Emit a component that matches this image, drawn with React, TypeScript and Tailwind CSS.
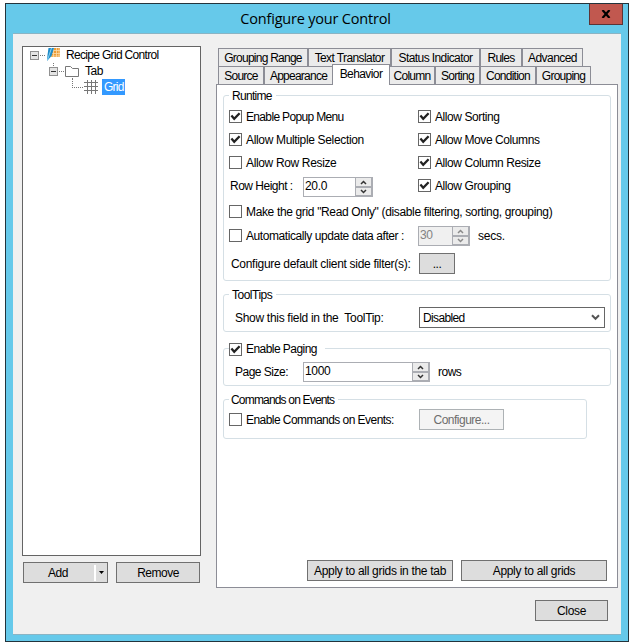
import type { ReactNode } from "react";
import clsx from "clsx";

const FONT = "font-['Liberation_Sans',Arial,sans-serif] text-[12px] leading-[14px] tracking-[-0.5px] text-black";

function Button({ className, children }: { className?: string; children: ReactNode }) {
  return (
    <button
      type="button"
      className={clsx(
        "flex h-[21px] shrink-0 items-center justify-center border whitespace-pre",
        className,
      )}
    >
      {children}
    </button>
  );
}

function Check({ label, checked, className }: { label: string; checked?: boolean; className?: string }) {
  return (
    <label className={clsx("flex h-[23px] items-center whitespace-pre", className)}>
      <span className="mr-1 h-[13px] w-[13px] shrink-0 border border-[#666] bg-white">
        {checked && (
          <svg width="11" height="11" viewBox="0 0 11 11" fill="none">
            <path d="M1.4 4.6 L4.2 7.8 L9.6 2.2" stroke="#222" strokeWidth="2.3" />
          </svg>
        )}
      </span>
      {label}
    </label>
  );
}

function Arrow({ down }: { down?: boolean }) {
  return (
    <svg width="7" height="5" viewBox="0 0 7 5" fill="none">
      <path d={down ? "M1 1 L3.5 3.5 L6 1" : "M1 4 L3.5 1.5 L6 4"} stroke="currentColor" strokeWidth="1.5" />
    </svg>
  );
}

function Spinner({ value, className, disabled }: { value: string; className: string; disabled?: boolean }) {
  return (
    <div
      className={clsx(
        "flex h-5 shrink-0 border border-[#abadb3]",
        disabled ? "bg-[#f0f0f0] text-[#838383]" : "bg-white",
        className,
      )}
    >
      <span className="flex-1 pt-px pl-px tracking-[-0.3px]">{value}</span>
      <div
        className={clsx(
          "flex w-[17px] flex-col border-l border-[#abadb3] bg-[#abadb3]",
          disabled ? "text-[#8a8a8a]" : "text-[#333]",
        )}
      >
        <span className="mr-px flex h-2 items-center justify-center bg-[#ebebeb]">
          <Arrow />
        </span>
        <span className="mt-[2px] mr-px flex h-[7px] items-center justify-center bg-[#ebebeb]">
          <Arrow down />
        </span>
      </div>
    </div>
  );
}

function Group({ title, className, children }: { title: ReactNode; className: string; children: ReactNode }) {
  return (
    <section className={clsx("rounded-[3px] border border-[#d5dfe5]", className)}>
      <div className="-mt-2 flex h-4 items-center">{title}</div>
      {children}
    </section>
  );
}

function Legend({ className, children }: { className?: string; children: ReactNode }) {
  return <span className={clsx("ml-[5px] bg-white pr-1 pl-[3px] whitespace-pre", className)}>{children}</span>;
}

function Tab({ label, className }: { label: string; className: string }) {
  return (
    <div
      className={clsx(
        "flex h-[18px] shrink-0 items-center justify-center border border-b-0 border-[#8c8d96] bg-[#ebebeb] pt-px whitespace-pre",
        className,
      )}
    >
      {label}
    </div>
  );
}

function Expander() {
  return (
    <>
      <rect x="0.5" y="4.5" width="8" height="8" fill="#e4e4e4" stroke="#919191" />
      <path d="M2 8.5h5" stroke="#333" />
    </>
  );
}

function Tree() {
  return (
    <div className="h-[510px] w-[179px] border border-[#646464] bg-white">
      <div className="flex h-4 items-center pl-[7px]">
        <svg width="36" height="16" viewBox="0 0 36 16" fill="none">
          <Expander />
          <path d="M10 8.5h6" stroke="#777" strokeDasharray="1 1" />
          <path d="M21 1h9v9h-9z" fill="#ec9a35" />
          <path d="M23.5 1v9M26.5 1v9M29 1v9M21 3.5h9M21 6.5h9M21 9h9" stroke="#fbdca9" strokeWidth=".8" />
          <path d="M18.5 1h5.5l-2.5 8-4.500 5 .5-6z" fill="#1d8bc9" />
          <path d="M21.5 1l-4 12" stroke="#8bd3f3" />
        </svg>
        <span className="tracking-[-0.68px]">Recipe Grid Control</span>
      </div>
      <div className="flex h-4 items-center pl-[26px]">
        <svg width="36" height="16" viewBox="0 0 36 16" fill="none">
          <path d="M4.5 0v4" stroke="#777" strokeDasharray="1 1" />
          <Expander />
          <path d="M10 8.5h5" stroke="#777" strokeDasharray="1 1" />
          <path d="M16.5 13.5v-10h5l2 2h6v8z" fill="#fff" stroke="#777" />
          <path d="M23.5 15v1" stroke="#777" />
        </svg>
        <span>Tab</span>
      </div>
      <div className="flex h-4 items-center pl-[49px]">
        <svg width="30" height="16" viewBox="0 0 30 16" fill="none">
          <path d="M.5 0v9M2 8.5h9" stroke="#777" strokeDasharray="1 1" />
          <path d="M15.5 1v14M19.5 1v14M23.5 1v14M12 3.5h14M12 7.5h14M12 11.5h14" stroke="#777" />
        </svg>
        <span className="w-[23px] bg-[#3399ff] py-px pl-0.5 tracking-[-0.75px] text-white">Grid</span>
      </div>
    </div>
  );
}

function Tabs() {
  return (
    <div className="relative z-10 pl-0.5 tracking-[-0.75px]">
      <div className="flex">
        <Tab label="Grouping Range" className="w-[90px]" />
        <Tab label="Text Translator" className="w-[83px] tracking-[-0.6px]" />
        <Tab label="Status Indicator" className="w-[89px] tracking-[-0.6px]" />
        <Tab label="Rules" className="w-[42px]" />
        <Tab label="Advanced" className="w-[61px] tracking-[-0.55px]" />
      </div>
      <div className="flex">
        <Tab label="Source" className="w-[46px]" />
        <Tab label="Appearance" className="w-[68px] border-r-0" />
        <div className="-mt-0.5 -mb-px flex h-[21px] w-[58px] items-center justify-center border border-b-0 border-[#8c8d96] bg-white pb-0.5 tracking-[-0.6px]">
          Behavior
        </div>
        <Tab label="Column" className="w-[45px] border-l-0" />
        <Tab label="Sorting" className="w-[45px]" />
        <Tab label="Condition" className="w-[56px]" />
        <Tab label="Grouping" className="w-[55px]" />
      </div>
    </div>
  );
}

function BehaviorPage() {
  return (
    <div className="flex h-[504px] w-[402px] flex-col border border-[#8c8d96] bg-white pt-2.5 pr-2.5 pb-1.5 pl-1.5">
      <Group title={<Legend className="tracking-[-0.7px]">Runtime</Legend>} className="h-[186px] w-[388px]">
        <div className="flex pt-px pl-[5px]">
          <div className="w-[189px]">
            <Check label="Enable Popup Menu" checked className="tracking-[-0.66px]" />
            <Check label="Allow Multiple Selection" checked className="tracking-[-0.34px]" />
            <Check label="Allow Row Resize" className="tracking-[-0.35px]" />
            <div className="mt-[3px] flex h-5 items-center pl-px">
              <span className="w-[73px] pb-0.5">Row Height :</span>
              <Spinner value="20.0" className="w-[70px]" />
            </div>
          </div>
          <div className="tracking-[-0.42px]">
            <Check label="Allow Sorting" checked />
            <Check label="Allow Move Columns" checked />
            <Check label="Allow Column Resize" checked />
            <Check label="Allow Grouping" checked />
          </div>
        </div>
        <Check
          label={'Make the grid "Read Only" (disable filtering, sorting, grouping)'}
          className="mt-[3px] ml-[5px] tracking-[-0.35px]"
        />
        <div className="mt-[3px] flex h-5 items-center pl-[5px]">
          <Check label="Automatically update data after :" className="w-[189px] pb-px tracking-[-0.43px]" />
          <Spinner value="30" className="w-[52px]" disabled />
          <span className="ml-2 tracking-[-0.2px]">secs.</span>
        </div>
        <div className="mt-[7px] flex items-center pl-[7px]">
          <span className="w-[188px] tracking-[-0.3px] whitespace-pre">Configure default client side filter(s):</span>
          <Button className="w-9 border-[#707070] bg-[#dddddd]">...</Button>
        </div>
      </Group>

      <Group title={<Legend>ToolTips</Legend>} className="mt-[13px] h-[38px] w-[388px]">
        <div className="mt-1 flex items-center pl-[11px]">
          <span className="w-[184px] tracking-[-0.3px] whitespace-pre">Show this field in the  ToolTip:</span>
          <div className="flex h-[21px] w-[186px] items-center justify-between border border-[#666] bg-white pr-1 pl-[3px]">
            <span className="tracking-[-0.65px]">Disabled</span>
            <svg width="9" height="7" viewBox="0 0 9 7" fill="none">
              <path d="M1 1.2l3.5 3.6L8 1.2" stroke="#555" strokeWidth="2" />
            </svg>
          </div>
        </div>
      </Group>

      <Group
        title={<Check label="Enable Paging" checked className="ml-[5px] h-4 bg-white pr-2 tracking-[-0.55px]" />}
        className="mt-4 h-[38px] w-[388px]"
      >
        <div className="mt-[5px] flex items-center pl-[11px]">
          <span className="w-[68px]">Page Size:</span>
          <Spinner value="1000" className="w-[127px]" />
          <span className="ml-2">rows</span>
        </div>
      </Group>

      <Group
        title={<Legend className="-indent-px tracking-[-0.82px]">Commands on Events</Legend>}
        className="mt-[13px] h-10 w-[364px]"
      >
        <div className="mt-px flex h-[21px] items-center pl-[5px]">
          <Check label="Enable Commands on Events:" className="w-[190px] tracking-[-0.55px]" />
          <Button className="w-[85px] border-[#adb2b5] bg-[#f4f4f4] text-[#6d6d6d]">Configure...</Button>
        </div>
      </Group>

      <div className="mt-auto flex justify-end gap-2 tracking-[-0.3px]">
        <Button className="w-[146px] border-[#707070] bg-[#dddddd]">Apply to all grids in the tab</Button>
        <Button className="w-[146px] border-[#707070] bg-[#dddddd]">Apply to all grids</Button>
      </div>
    </div>
  );
}

export default function App() {
  return (
    <div className={clsx("h-[644px] w-[634px] bg-white pt-[3px] pl-[5px]", FONT)}>
      <div className="flex h-[639px] w-[624px] flex-col border border-[#23343c] bg-[#66c9ea] px-[7px]">
        <header className="flex h-[29px] shrink-0 items-start">
          <h1 className="flex-1 pt-[5px] pl-[29px] text-center font-['Open_Sans','Noto_Sans',sans-serif] text-[14.5px] leading-5 tracking-[-0.2px]">
            Configure your Control
          </h1>
          <button
            type="button"
            aria-label="Close"
            className="-mr-0.5 flex h-[21px] w-[34px] items-center justify-center border border-t-0 border-[#5c3436] bg-[#c1584f]"
          >
            <svg width="10" height="8" viewBox="0 0 10 8">
              <path d="M1.5 0L8.5 8M8.5 0L1.5 8" stroke="#000" strokeWidth="2.2" />
            </svg>
          </button>
        </header>

        <main className="h-[602px] border-y border-[#8ab4c4] bg-[#f0f0f0] pr-[3px] pl-[9px]">
          <div className="flex items-start justify-between pt-3">
            <div>
              <Tree />
              <div className="mt-1.5 flex gap-2 pl-px">
                <button type="button" className="flex h-[21px] w-[85px] items-center border border-[#707070] bg-[#dddddd]">
                  <span className="flex-1 pr-0.5 text-center">Add</span>
                  <span className="h-4 w-0.5 bg-white" />
                  <svg width="11" height="5" viewBox="0 0 11 5">
                    <path d="M3 1h5L5.5 4z" fill="#000" />
                  </svg>
                </button>
                <Button className="w-[84px] border-[#707070] bg-[#dddddd]">Remove</Button>
              </div>
            </div>
            <div className="pt-0.5">
              <Tabs />
              <BehaviorPage />
            </div>
          </div>
          <div className="mt-3 flex justify-end pr-2.5">
            <Button className="w-[73px] border-[#707070] bg-[#dddddd] tracking-[-0.3px]">Close</Button>
          </div>
        </main>
      </div>
    </div>
  );
}
